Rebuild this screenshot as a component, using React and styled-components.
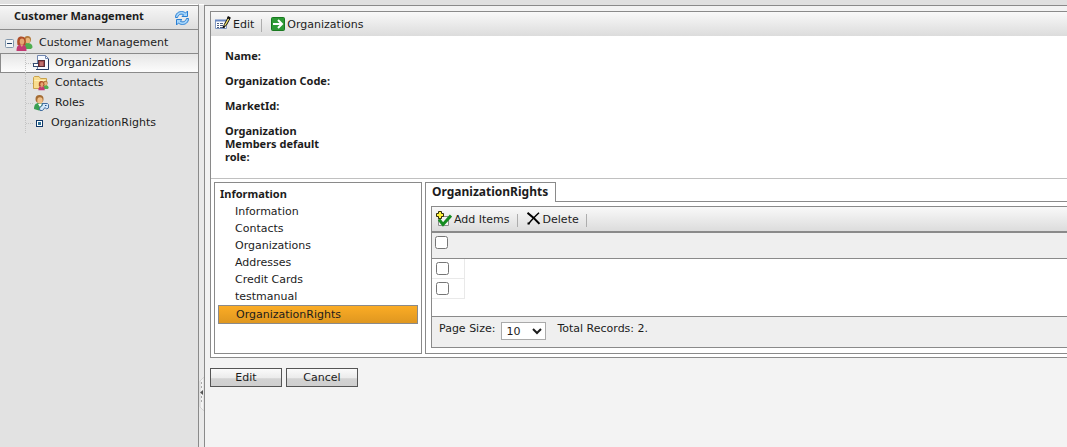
import React from "react";
import styled, { createGlobalStyle } from "styled-components";

const line = "#8a8a8a";
const barFill = "linear-gradient(#f9f9f9, #dcdcdc)";
const boldFamily = '"Noto Sans", sans-serif';

const GlobalStyle = createGlobalStyle`
  *, *::before, *::after { box-sizing: border-box; }
  body {
    margin: 0;
    background: #e0e0e0;
    color: #1c1c1c;
    font-family: "DejaVu Sans", sans-serif;
    font-size: 11px;
    line-height: 13px;
  }
  button, select, input { font: inherit; color: inherit; }
  ul { margin: 0; padding: 0; list-style: none; }
  a { color: inherit; text-decoration: none; }
`;

const Shell = styled.div`
  display: flex;
  min-height: 100vh;
  padding-top: 4px;
  overflow: hidden;
`;

const Sidebar = styled.aside`
  flex: 0 0 199px;
  border-top: 1px solid #fff;
  border-right: 1px solid ${line};
  background: #e2e2e2;
`;

const SidebarHeader = styled.header`
  display: flex;
  align-items: center;
  justify-content: space-between;
  height: 25px;
  padding: 0 8px 0 14px;
  border-top: 1px solid ${line};
  border-bottom: 1px solid ${line};
  background: linear-gradient(#f6f6f6, #dedede);
`;

const SidebarTitle = styled.h1`
  margin: 0;
  padding-bottom: 4px;
  font-family: ${boldFamily};
  font-size: 11px;
  font-weight: 700;
`;

const IconButton = styled.button`
  display: flex;
  padding: 0;
  border: 0;
  background: none;
`;

const Tree = styled.nav`
  padding-top: 3px;
`;

const TreeRow = styled.a`
  display: flex;
  align-items: center;
  height: 20px;
  padding-left: ${(p) => (p.$root ? "4px" : "24px")};
  border: 1px solid ${(p) => (p.$active ? line : "transparent")};
  border-right-width: 0;
  background: ${(p) => (p.$active ? "linear-gradient(#e6e6e6, #fcfcfc)" : "none")};
`;

const RootIcon = styled.span`
  display: flex;
  padding-left: 2px;
`;

const TreeLabel = styled.span`
  padding: 0 0 2px 6px;
`;

const Branch = styled.span`
  align-self: stretch;
  display: flex;
  align-items: center;
  width: 8px;
  margin: -1px 0;
  border-left: 1px dotted #c4c4c4;
  &::after {
    content: "";
    width: 8px;
    border-top: 1px dotted #c4c4c4;
  }
`;

const Splitter = styled.div`
  flex: 0 0 5px;
  display: flex;
  flex-direction: column;
  justify-content: flex-end;
  padding-bottom: 36px;
  border-top: 1px solid #fff;
  background: #eaeaea;
`;

const Content = styled.main`
  flex: 1;
  min-width: 0;
  margin-top: 1px;
  padding: 5px 0 0 5px;
  border-top: 1px solid ${line};
  border-left: 1px solid ${line};
  background: #f3f3f3;
`;

const Panel = styled.section`
  border: 1px solid ${line};
  border-right: 0;
  background: #fff;
`;

const Toolbar = styled.div`
  display: flex;
  align-items: center;
  height: 24px;
  padding-left: 4px;
  background: ${barFill};
`;

const ToolButton = styled.button`
  display: flex;
  align-items: center;
  gap: 2px;
  padding: 0;
  border: 0;
  background: none;
`;

const Divider = styled.span`
  width: 1px;
  height: 13px;
  margin: 2px 9px 0 7px;
  background: #adadad;
`;

const Fields = styled.dl`
  display: flex;
  flex-direction: column;
  gap: 12px;
  margin: 0;
  padding: 13px 14px 15px;
  border-bottom: 1px solid #c0c0c0;
`;

const FieldName = styled.dt`
  width: 112px;
  font-family: ${boldFamily};
  font-weight: 700;
`;

const Detail = styled.div`
  display: grid;
  grid-template-columns: 208px minmax(0, 1fr);
  gap: 3px;
  padding: 3px 0 3px 3px;
`;

const Menu = styled.nav`
  padding: 4px 3px;
  border: 1px solid ${line};
`;

const MenuTitle = styled.h2`
  margin: 0 0 3px;
  padding-left: 2px;
  font-family: ${boldFamily};
  font-size: 11px;
  font-weight: 700;
`;

const MenuLink = styled.a`
  display: flex;
  align-items: center;
  height: ${(p) => (p.$active ? "19px" : "17px")};
  padding-left: 17px;
  border: ${(p) => (p.$active ? `1px solid ${line}` : "0 solid")};
  background: ${(p) => (p.$active ? "linear-gradient(#fbac25, #df9720)" : "none")};
`;

const TabPanel = styled.section`
  border: 1px solid ${line};
  border-top: 0;
  border-right: 0;
`;

const TabBar = styled.div`
  display: flex;
  height: 20px;
  &::after {
    content: "";
    flex: 1;
    border-bottom: 1px solid ${line};
  }
`;

const Tab = styled.button`
  padding: 0 7px 2px 6px;
  border: solid ${line};
  border-width: 1px 1px 0 0;
  background: #fff;
  && {
    font-family: ${boldFamily};
    font-size: 12px;
    font-weight: 700;
  }
`;

const Grid = styled.div`
  margin: 4px 0 5px 5px;
  border: 1px solid ${line};
  border-right: 0;
`;

const GridBody = styled.div`
  min-height: 85px;
`;

const Table = styled.table`
  width: 100%;
  border-collapse: separate;
  border-spacing: 0;
`;

const HeadCell = styled.th`
  width: ${(p) => (p.$check ? "33px" : "auto")};
  height: 28px;
  padding: ${(p) => (p.$check ? "0 0 7px 3px" : "0")};
  border-top: 2px solid ${line};
  border-bottom: 1px solid ${line};
  background: #efefef;
  text-align: left;
`;

const Cell = styled.td`
  height: 20px;
  padding: ${(p) => (p.$check ? "0 0 0 4px" : "0")};
  border: solid #e9e9e9;
  border-width: ${(p) => (p.$check ? "0 1px 1px 0" : "0")};
`;

const Check = styled.input`
  display: block;
  width: 13px;
  height: 13px;
  margin: 0;
`;

const Pager = styled.footer`
  display: flex;
  align-items: flex-start;
  height: 31px;
  padding: 5px 7px;
  border-top: 1px solid ${line};
  background: #efefef;
`;

const PageSize = styled.label`
  display: flex;
  gap: 6px;
  padding-right: 11px;
`;

const Select = styled.select`
  width: 45px;
  height: 18px;
  padding: 0;
  border: 1px solid #aaa;
  background: #fff;
`;

const Actions = styled.div`
  display: flex;
  gap: 4px;
  padding-top: 10px;
`;

const Button = styled.button`
  width: 72px;
  height: 19px;
  padding: 0;
  border: 1px solid #555;
  background: linear-gradient(#fafafa 0, #ececec 50%, #d2d2d2 58%, #cfcfcf 100%);
`;

const Refresh = () => (
  <svg width="16" height="16" viewBox="0 0 16 16" aria-hidden="true">
    <g fill="#a5d5fa" stroke="#2a7fd4" strokeLinejoin="round">
      <path d="M1.500 7.500C1.500 3.500 4.500 1.500 7.500 1.500c1.800 0 3 .6 4 1.500L13.500 1V6.500H8l1.700-1.700C7.500 3.500 4.500 4 3.500 7.500z" />
      <path d="M14.500 8.500c0 4-3 6-6 6-1.800 0-3-.6-4-1.500L2.500 15V9.500H8l-1.700 1.700c2.200 1.300 5.200.8 6.200-2.700z" />
    </g>
  </svg>
);

const Collapse = () => (
  <svg width="9" height="9" viewBox="0 0 9 9" aria-hidden="true">
    <rect x=".5" y=".5" width="8" height="8" rx="1" fill="#f4f6f8" stroke="#8197ac" />
    <path d="M2 4.500h5" stroke="#203e64" />
  </svg>
);

const People = ({ size = 17 }) => (
  <svg width={size} height={size} viewBox="0 0 17 17" aria-hidden="true">
    <path d="M8 13c0-4 1-5 3.500-5S16.500 9 16.500 12.500L15 14H9z" fill="#4fae50" />
    <circle cx="11.500" cy="4.500" r="3.500" fill="#b37a3c" />
    <ellipse cx="11.800" cy="5.500" rx="2.300" ry="2.700" fill="#e9b57a" />
    <path d="M1.500 10C.5 4 2 1.500 5.500 1.500S10.500 4.500 9.500 10z" fill="#b04e28" />
    <path d="M.5 16c0-5 1.500-6.500 5-6.500s5 1.500 5 6.500z" fill="#c23a72" />
    <ellipse cx="6" cy="6.500" rx="2.300" ry="3" fill="#e5a674" />
    <path d="M4 9.500h3.500L5.800 12z" fill="#e5a674" />
  </svg>
);

const OrgIcon = () => (
  <svg width="16" height="16" viewBox="0 0 16 16" aria-hidden="true">
    <path d="M4.500.5h8l3 3v11h-11z" fill="#f7faff" stroke="#7187b0" />
    <path d="M3 14.500h12.500V4" fill="none" stroke="#263b62" />
    <path d="M12.500.5v3h3" fill="none" stroke="#7187b0" />
    <rect x=".5" y="8.500" width="5" height="3" fill="#fff" stroke="#344b70" />
    <rect x="5.500" y="5.500" width="6" height="6" fill="#a44b4b" stroke="#532c35" />
    <path d="M7 8h3M7 10h3" stroke="#d79791" />
  </svg>
);

const FolderIcon = () => (
  <svg width="16" height="16" viewBox="0 0 16 16" aria-hidden="true">
    <path d="M.5 13.500v-11l1-1H6l1.500 2h6v10z" fill="#f8dd90" stroke="#c9a24c" />
    <path d="M1.500 5.500h11" stroke="#fff0b5" />
    <g transform="translate(5 5)"><People size={11} /></g>
  </svg>
);

const RoleIcon = () => (
  <svg width="16" height="16" viewBox="0 0 16 16" aria-hidden="true">
    <path d="M1 14c0-4 1.500-6 5-6s5 2 5 6l-5 1.500z" fill="#3a9f52" />
    <circle cx="6.500" cy="4" r="4" fill="#a46b32" />
    <ellipse cx="7" cy="5.500" rx="2.700" ry="3.200" fill="#efc08a" />
    <path d="M5 9h4l-2 3z" fill="#fff" />
    <path d="m6.500 13 3-3-.5-1.500h5.500l1 1v3.500l-2 1-1.500-1.500-2.500 3H7z" fill="#d4e8fa" stroke="#426e9f" />
    <path d="M12 10.500h1.500" stroke="#225188" />
  </svg>
);

const NodeIcon = () => (
  <svg width="7" height="7" viewBox="0 0 7 7" aria-hidden="true">
    <rect x=".5" y=".5" width="6" height="6" fill="#fff" stroke="#103868" />
    <path d="M2 2h3v3H2z" fill="#2f7296" />
  </svg>
);

const EditIcon = () => (
  <svg width="16" height="16" viewBox="0 0 16 16" aria-hidden="true">
    <path d="M.5 4.500h11v8H.5z" fill="#fff" stroke="#8198c1" />
    <path d="M0 4.500h11" stroke="#6787c4" strokeWidth="2" />
    <path d="M2 7.500h2m1 0h3m-6 2h2m1 0h3m-6 2h2m1 0h4" stroke="#4c5f82" />
    <path d="m8.500 11.500.8-3L13 1.500l2 1-3.700 6.800z" fill="#f2e36b" stroke="#111" />
    <path d="m12.500 1 2.800 1.500M8.500 12l.5-2" stroke="#111" strokeWidth="2" />
  </svg>
);

const GoIcon = () => (
  <svg width="14" height="14" viewBox="0 0 14 14" aria-hidden="true">
    <rect x=".5" y=".5" width="13" height="13" rx="1" fill="#2d9a35" stroke="#19791f" />
    <path d="M2 7h9M7 3l4 4-4 4" fill="none" stroke="#fff" strokeWidth="2" />
  </svg>
);

const AddIcon = () => (
  <svg width="16" height="16" viewBox="0 0 16 16" aria-hidden="true">
    <path d="M2.500 5.500h10v9h-10z" fill="#f4f4f4" stroke="#8c8c8c" />
    <path d="m3 8.500 4 5L15 4.500" fill="none" stroke="#148c20" strokeWidth="3" />
    <path d="M2.500.5h3v2h2v3h-2v2h-3v-2h-2v-3h2z" fill="#fff33b" stroke="#302d0a" />
  </svg>
);

const DeleteIcon = () => (
  <svg width="14" height="14" viewBox="0 0 14 14" aria-hidden="true">
    <path d="M.5.8c4 3 8.500 7 12 11" stroke="#000" strokeWidth="2" fill="none" />
    <path d="M12 .8C8 4.500 4.500 8 1.500 12" stroke="#000" strokeWidth="1.500" fill="none" />
    <path d="M.5 10.500h2v2h-2z" />
  </svg>
);

const Grip = () => (
  <svg width="5" height="34" viewBox="0 0 5 34" aria-hidden="true">
    <path d="M5 0 1 4v26l4 4z" fill="#f4f4f4" stroke="#d4d4d4" />
    <path d="M2 6h1m-1 4h1m-1 10h1m-1 4h1" stroke="#aaa" strokeWidth="2" />
    <path d="M4 13v5L1 15.500z" fill="#555" />
  </svg>
);

const treeItems = [
  { label: "Organizations", Icon: OrgIcon, active: true },
  { label: "Contacts", Icon: FolderIcon },
  { label: "Roles", Icon: RoleIcon },
];

const menuItems = [
  "Information",
  "Contacts",
  "Organizations",
  "Addresses",
  "Credit Cards",
  "testmanual",
  "OrganizationRights",
];

const fields = [
  "Name:",
  "Organization Code:",
  "MarketId:",
  "Organization Members default role:",
];

const NodeSlot = styled.span`
  display: flex;
  justify-content: flex-end;
  width: 10px;
  margin-right: 2px;
`;

export default function App() {
  return (
    <>
      <GlobalStyle />
      <Shell>
        <Sidebar>
          <SidebarHeader>
            <SidebarTitle>Customer Management</SidebarTitle>
            <IconButton aria-label="Refresh"><Refresh /></IconButton>
          </SidebarHeader>
          <Tree>
            <TreeRow href="#root-node" $root>
              <Collapse />
              <RootIcon><People /></RootIcon>
              <TreeLabel>Customer Management</TreeLabel>
            </TreeRow>
            {treeItems.map(({ label, Icon, active }) => (
              <TreeRow key={label} href={`#${label}`} $active={active}>
                <Branch />
                <Icon />
                <TreeLabel>{label}</TreeLabel>
              </TreeRow>
            ))}
            <TreeRow href="#OrganizationRights">
              <Branch />
              <NodeSlot><NodeIcon /></NodeSlot>
              <TreeLabel>OrganizationRights</TreeLabel>
            </TreeRow>
          </Tree>
        </Sidebar>
        <Splitter><Grip /></Splitter>
        <Content>
          <Panel>
            <Toolbar>
              <ToolButton><EditIcon />Edit</ToolButton>
              <Divider />
              <ToolButton><GoIcon />Organizations</ToolButton>
            </Toolbar>
            <Fields>
              {fields.map((name) => (
                <FieldName key={name}>{name}</FieldName>
              ))}
            </Fields>
            <Detail>
              <Menu>
                <MenuTitle>Information</MenuTitle>
                <ul>
                  {menuItems.map((item) => (
                    <li key={item}>
                      <MenuLink href={`#${item}`} $active={item === "OrganizationRights"}>
                        {item}
                      </MenuLink>
                    </li>
                  ))}
                </ul>
              </Menu>
              <TabPanel>
                <TabBar><Tab>OrganizationRights</Tab></TabBar>
                <Grid>
                  <Toolbar>
                    <ToolButton><AddIcon />Add Items</ToolButton>
                    <Divider />
                    <ToolButton><DeleteIcon />Delete</ToolButton>
                    <Divider />
                  </Toolbar>
                  <GridBody>
                    <Table>
                      <thead>
                        <tr>
                          <HeadCell $check><Check type="checkbox" aria-label="Select all" /></HeadCell>
                          <HeadCell />
                        </tr>
                      </thead>
                      <tbody>
                        {[1, 2].map((row) => (
                          <tr key={row}>
                            <Cell $check><Check type="checkbox" aria-label={`Select row ${row}`} /></Cell>
                            <Cell />
                          </tr>
                        ))}
                      </tbody>
                    </Table>
                  </GridBody>
                  <Pager>
                    <PageSize>
                      Page Size:
                      <Select defaultValue="10">
                        <option>10</option>
                        <option>20</option>
                        <option>50</option>
                      </Select>
                    </PageSize>
                    <span>Total Records: 2.</span>
                  </Pager>
                </Grid>
              </TabPanel>
            </Detail>
          </Panel>
          <Actions>
            <Button>Edit</Button>
            <Button>Cancel</Button>
          </Actions>
        </Content>
      </Shell>
    </>
  );
}
